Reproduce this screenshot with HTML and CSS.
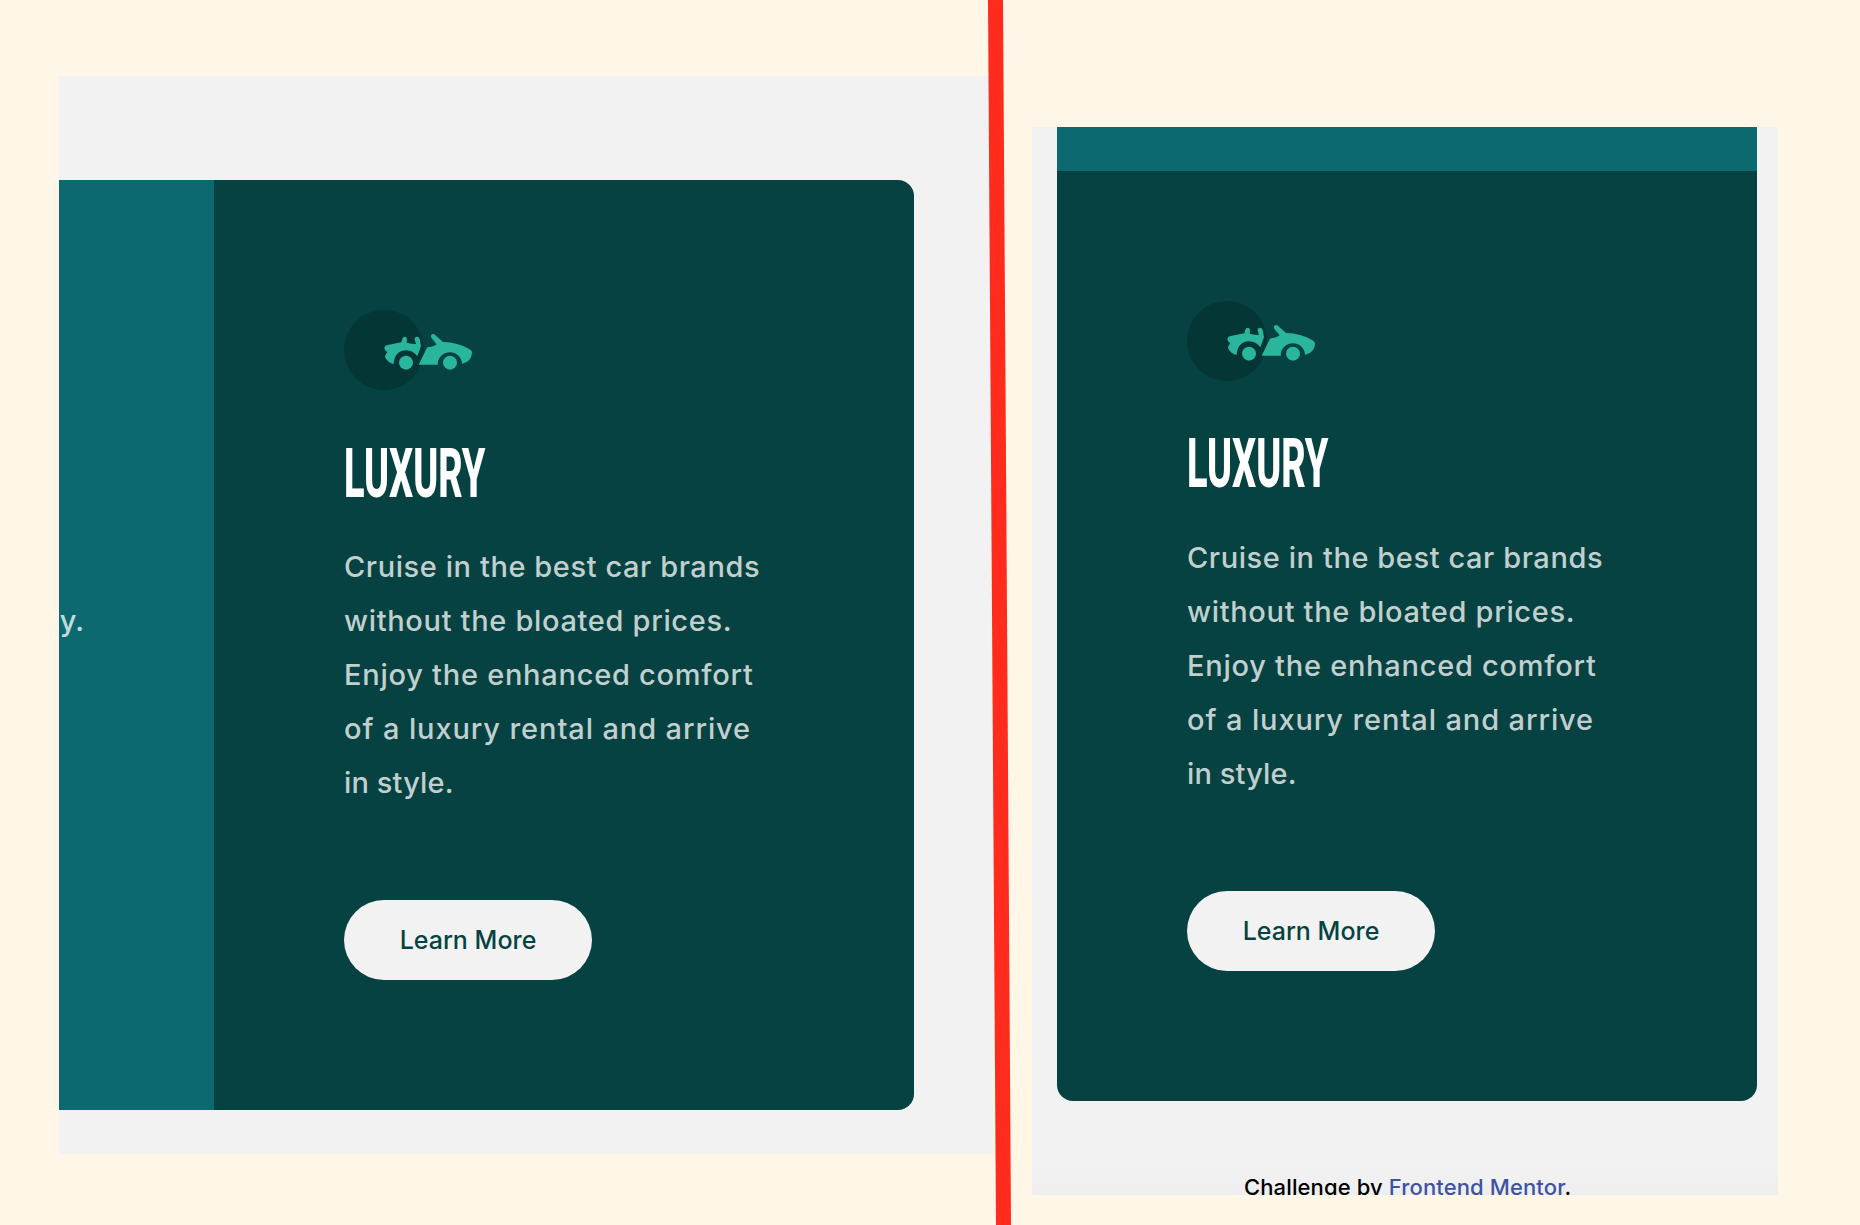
FILE: index.html
```html
<!DOCTYPE html>
<html lang="en">
<head>
<meta charset="utf-8">
<title>Luxury card comparison</title>
<link rel="stylesheet" href="styles.css">
</head>
<body>
<svg width="0" height="0" class="defs">
  <symbol id="car" viewBox="0 0 390 240">
    <circle class="disc" cx="120" cy="120" r="120"/>
    <g class="car" transform="translate(-42 -60)">
      <path d="M163 173Q165 166 173 165L214 157L217 146Q219 140 225 140Q231 141 231 148L230 158Q245 162 258 162L254 149Q253 140 261 140Q267 140 269 147L273 168L262 199Q250 181 228 181Q193 183 191 222Q175 219 166 203Q163 198 168 193L172 187Q163 181 163 173Z"/>
      <path d="M266 224L290 175Q293 170 301 171Q309 171 320 163L305 145Q300 137 306 133Q312 130 318 137L339 156Q385 157 417 177Q427 181 426 190Q424 215 396 222A36.500 36.500 0 0 0 323 224Z"/>
      <circle cx="228" cy="218" r="21"/>
      <circle cx="360" cy="218" r="21"/>
    </g>
  </symbol>
</svg>
<main class="board">
  <section class="shot shot-wide">
    <div class="card-row">
      <div class="suv-column"><p class="suv-text"><span>ry.</span></p></div>
      <article class="card">
        <svg class="icon"><use href="#car"/></svg>
        <h2><span>LUXURY</span></h2>
        <p class="copy"><span class="l1">Cruise in the best car brands</span><span class="l2">without the bloated prices.</span><span class="l3">Enjoy the enhanced comfort</span><span class="l4">of a luxury rental and arrive</span><span class="l5">in style.</span></p>
        <a class="button">Learn More</a>
      </article>
    </div>
  </section>
  <section class="shot shot-narrow">
    <div class="suv-strip"></div>
    <article class="card card-end">
      <svg class="icon"><use href="#car"/></svg>
      <h2><span>LUXURY</span></h2>
      <p class="copy"><span class="l1">Cruise in the best car brands</span><span class="l2">without the bloated prices.</span><span class="l3">Enjoy the enhanced comfort</span><span class="l4">of a luxury rental and arrive</span><span class="l5">in style.</span></p>
      <a class="button">Learn More</a>
    </article>
    <footer>Challenge by <a>Frontend Mentor</a>.</footer>
  </section>
</main>
<svg class="divider" viewBox="0 0 1860 1225"><path d="M988 0H1003L1011 1225H996Z"/></svg>
</body>
</html>
```

FILE: styles.css
```css
* { box-sizing: border-box; margin: 0; padding: 0; }
body { width: 1860px; height: 1225px; overflow: hidden; background: #fef6e7; font-family: Inter, "Liberation Sans", sans-serif; }
.defs { display: block; }
.board { display: flex; align-items: flex-start; gap: 39px; padding: 76px 0 0 59px; }
.shot { background: #f2f2f2; overflow: hidden; }
.shot-wide { width: 934px; height: 1078px; padding-top: 104px; }
.card-row { display: flex; width: 855px; height: 930px; border-radius: 0 16px 16px 0; overflow: hidden; }
.suv-column { width: 155px; background: #0c6970; overflow: hidden; }
.suv-text { width: 25px; margin-top: 414px; display: flex; justify-content: flex-end; font-size: 29px; line-height: 54px; color: #c2dadb; font-weight: 470; }
.card { width: 700px; height: 930px; padding: 130px; background: #064241; }
.card-end { margin-left: 25px; border-radius: 0 0 16px 16px; }
.icon { display: block; width: 130px; height: 80px; }
.disc { fill: #033635; }
.car { fill: #29b69c; }
h2 { height: 60px; margin: 54px 0 36px; font: 800 69px/60px Roboto, sans-serif; color: #fff; }
h2 span { display: inline-block; transform: scaleX(.549); transform-origin: 0 50%; }
.card-end h2 { margin: 53px 0 37px; }
.copy { font-size: 29px; line-height: 54px; color: #c1d0cf; font-weight: 470; white-space: nowrap; }
.copy span { display: block; }
.copy .l1 { letter-spacing: .58px; }
.copy .l2 { letter-spacing: .67px; }
.copy .l3 { letter-spacing: .74px; }
.copy .l4 { letter-spacing: .89px; }
.copy .l5 { letter-spacing: .12px; }
.button { display: flex; align-items: center; justify-content: center; width: 248px; height: 80px; margin-top: 90px; border-radius: 40px; background: #f2f2f2; color: #064241; font-size: 25px; font-weight: 450; }
.shot-narrow { width: 746px; height: 1068px; margin-top: 51px; background: linear-gradient(#f2f2f2 1040px, #eeeeee 1068px); }
.suv-strip { width: 700px; height: 44px; margin-left: 25px; background: #0c6970; }
footer { margin: 71px 0 0 212px; font-size: 22px; line-height: 30px; letter-spacing: .12px; white-space: nowrap; font-weight: 450; color: #000; }
footer a { color: #3e52a3; }
.divider { position: absolute; left: 0; top: 0; width: 1860px; height: 1225px; fill: #ff2b1d; }
```
